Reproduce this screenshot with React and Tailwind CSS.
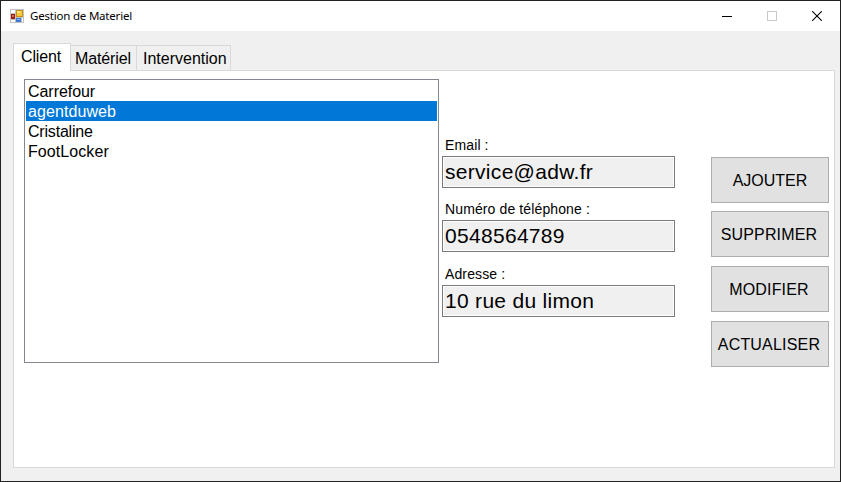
const clients = [
  { name: "Carrefour", spacing: "tracking-[-0.05px]" },
  { name: "agentduweb", spacing: "tracking-[0.08px]" },
  { name: "Cristaline", spacing: "tracking-[-0.2px]" },
  { name: "FootLocker", spacing: "tracking-[0.08px]" },
];

function AppIcon() {
  return (
    <svg width="14" height="14" viewBox="0 0 14 14" className="shrink-0" shapeRendering="crispEdges">
      <rect width="14" height="14" fill="#c3c3c3" />
      <rect x="1" y="1" width="4" height="3" fill="#fff" />
      <rect x="1" y="11" width="4" height="2" fill="#fff" />
      <rect x="12" y="9" width="1" height="4" fill="#fff" />
      <rect x="1" y="5" width="4" height="5" fill="#a51c12" />
      <rect x="2" y="6" width="2" height="2" fill="#d9665c" />
      <rect x="6" y="1" width="7" height="7" fill="#c98f10" />
      <rect x="7" y="2" width="5" height="5" fill="#f8c93a" />
      <rect x="7" y="2" width="3" height="2" fill="#ffe68c" />
      <rect x="6" y="9" width="5" height="4" fill="#3f78d8" />
      <rect x="7" y="10" width="3" height="1" fill="#8db8f7" />
    </svg>
  );
}

function TitleBar() {
  return (
    <header className="flex h-[30px] shrink-0 items-center bg-white pl-[9px]">
      <AppIcon />
      <h1 className="ml-[6px] grow text-[11.5px] leading-[16px] tracking-[-0.2px] font-['Noto_Sans','Open_Sans',sans-serif]">
        Gestion de Materiel
      </h1>
      <svg width="100" height="10" viewBox="0 0 100 10" className="mr-[18px] shrink-0" shapeRendering="crispEdges">
        <rect x="0" y="5" width="10" height="1" fill="#000" />
        <rect x="45.5" y="0.5" width="9" height="9" fill="none" stroke="#c9c9c9" />
        <path d="M90.2 0.2l9.6 9.6M99.8 0.2l-9.6 9.6" stroke="#000" strokeWidth="1.1" shapeRendering="auto" />
      </svg>
    </header>
  );
}

function Tabs() {
  return (
    <nav className="flex h-[27px] items-end">
      <div className="z-10 -mb-px flex h-[28px] w-[58px] self-start border border-b-0 border-[#d9d9d9] bg-white pl-[7px] leading-[26px] tracking-[-0.15px]">
        Client
      </div>
      <div className="h-[25px] w-[66px] border-t border-r border-[#d9d9d9] bg-[#f0f0f0] pl-[4px] leading-[26px] tracking-[-0.12px]">
        Matériel
      </div>
      <div className="h-[25px] w-[94px] border-t border-r border-[#d9d9d9] bg-[#f0f0f0] pl-[6px] leading-[26px] whitespace-nowrap">
        Intervention
      </div>
    </nav>
  );
}

function Field({ label, value, className }) {
  return (
    <div className={className}>
      <div className="h-[20px] pl-[3px] text-[14px] leading-[18px] tracking-[0.12px] whitespace-nowrap">{label}</div>
      <div className="h-[32px] w-[233px] border border-[#7a7a7a] bg-white p-px">
        <div className="h-full bg-[#f0f0f0] pl-px text-[21px] leading-[28px] tracking-[0.3px] whitespace-nowrap">{value}</div>
      </div>
    </div>
  );
}

function Button({ children, className = "" }) {
  return (
    <button
      className={`flex h-[46px] w-[118px] items-center justify-center border border-[#adadad] bg-[#e1e1e1] pt-[2px] ${className}`}
    >
      {children}
    </button>
  );
}

export default function App() {
  return (
    <div className="flex h-[482px] w-[841px] flex-col overflow-hidden border border-[#222] bg-[#f0f0f0] text-[16px] text-black font-['Liberation_Sans',Arial,sans-serif]">
      <TitleBar />
      <main className="px-[12px] pt-[12px]">
        <Tabs />
        <section className="flex h-[398px] w-[822px] border border-[#d9d9d9] bg-white pl-[10px]">
          <ul className="mt-[8px] h-[284px] w-[415px] shrink-0 border border-[#828790] bg-white p-px">
            {clients.map(({ name, spacing }) => (
              <li
                key={name}
                className={`h-[20px] pl-[2px] leading-[22px] ${spacing} ${name === "agentduweb" ? "bg-[#0078d7] text-white" : ""}`}
              >
                {name}
              </li>
            ))}
          </ul>
          <div className="ml-[3px] pt-[65px]">
            <Field label="Email :" value="service@adw.fr" />
            <Field label="Numéro de téléphone :" value="0548564789" className="mt-[12px]" />
            <Field label="Adresse :" value="10 rue du limon" className="mt-[13px]" />
          </div>
          <div className="ml-[36px] pt-[86px]">
            <Button>AJOUTER</Button>
            <Button className="mt-[8px] pr-[2px] tracking-[0.15px]">SUPPRIMER</Button>
            <Button className="mt-[9px] pr-[2px] tracking-[0.15px]">MODIFIER</Button>
            <Button className="mt-[9px] pr-[2px] tracking-[0.2px]">ACTUALISER</Button>
          </div>
        </section>
      </main>
    </div>
  );
}
